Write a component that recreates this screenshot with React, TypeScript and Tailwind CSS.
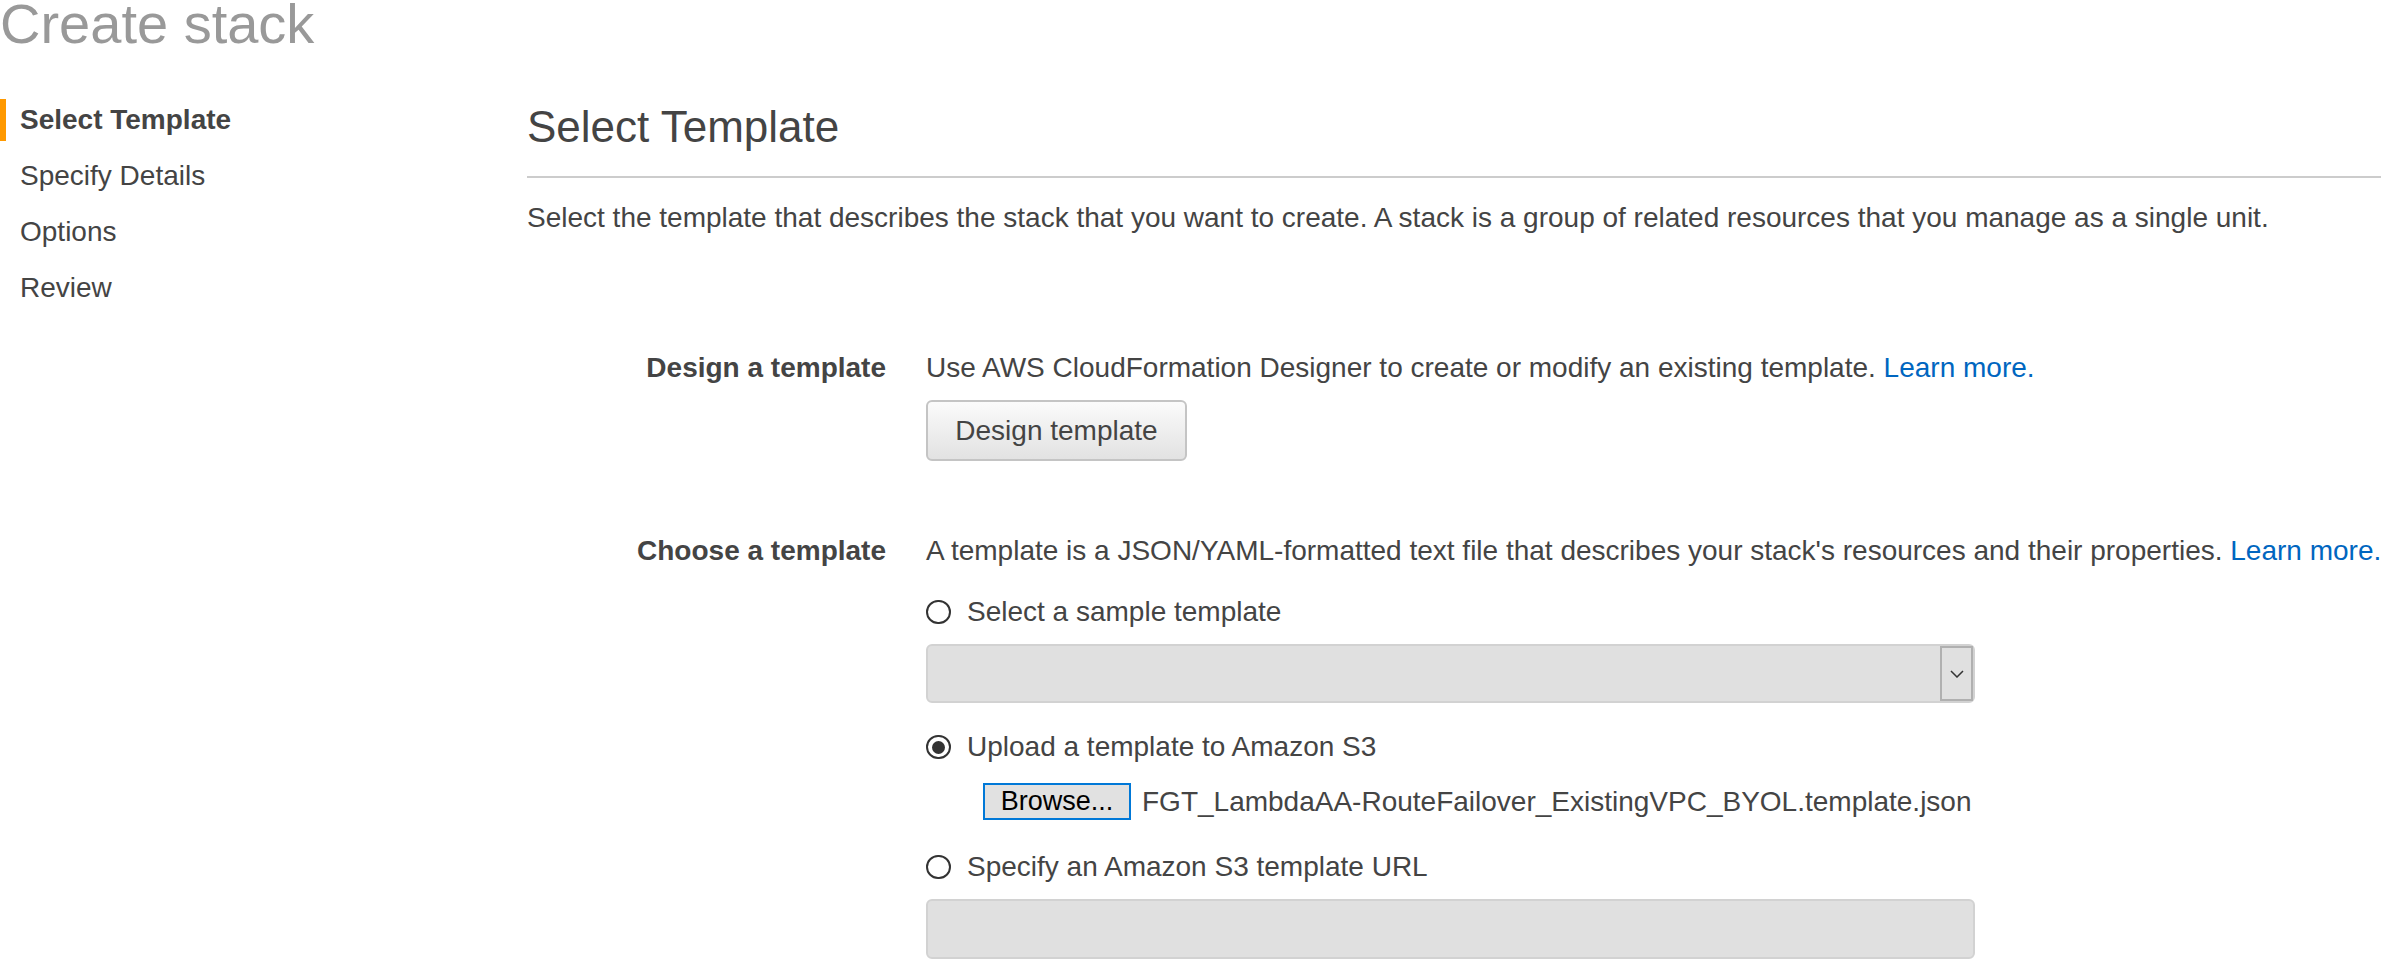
import React from "react";

function Radio({ checked }: { checked?: boolean }) {
  return (
    <span className="w-[25px] h-[24px] rounded-full border-2 border-[#333] bg-white flex items-center justify-center shrink-0">
      {checked ? <span className="w-[13px] h-[13px] rounded-full bg-[#333]" /> : null}
    </span>
  );
}

function RadioRow({ label, checked, className }: { label: string; checked?: boolean; className?: string }) {
  return (
    <div className={"flex items-center gap-[16px] h-[32px] " + (className ?? "")}>
      <Radio checked={checked} />
      <span className="text-[28px] leading-[32px] whitespace-nowrap">{label}</span>
    </div>
  );
}

export default function App() {
  return (
    <div className="w-[2381px] h-[965px] overflow-hidden bg-white text-[#444] font-[family-name:'Liberation_Sans',Arial,sans-serif]">
      <h1 className="text-[56px] leading-[56px] text-[#999] mt-[-4px] whitespace-nowrap font-normal">Create stack</h1>
      <div className="flex">
        <nav className="w-[527px] shrink-0 pt-[47px] flex flex-col gap-[14px] text-[28px]">
          <div className="h-[42px] flex items-center border-l-[6px] border-[#f90] pl-[14px] font-bold">Select Template</div>
          <div className="h-[42px] flex items-center pl-[20px]">Specify Details</div>
          <div className="h-[42px] flex items-center pl-[20px]">Options</div>
          <div className="h-[42px] flex items-center pl-[20px]">Review</div>
        </nav>
        <main className="flex-1 min-w-0 pt-[50px]">
          <h2 className="text-[44px] leading-[50px] font-normal whitespace-nowrap">Select Template</h2>
          <div className="mt-[24px] h-[2px] bg-[#cccccc]" />
          <p className="mt-[24px] text-[28px] leading-[32px] whitespace-nowrap">
            Select the template that describes the stack that you want to create. A stack is a group of related resources that you manage as a single unit.
          </p>

          <div className="mt-[118px] grid grid-cols-[359px_1fr] gap-x-[40px] text-[28px] leading-[32px]">
            <div className="text-right font-bold whitespace-nowrap">Design a template</div>
            <div>
              <p className="whitespace-nowrap">
                Use AWS CloudFormation Designer to create or modify an existing template.{" "}
                <span className="text-[#0066c0]">Learn more.</span>
              </p>
              <button className="mt-[16px] h-[61px] w-[261px] rounded-[6px] border-2 border-[#c4c4c4] bg-gradient-to-b from-[#fbfbfb] to-[#e2e2e2] text-[28px] text-[#444] flex items-center justify-center">
                Design template
              </button>
            </div>
          </div>

          <div className="mt-[74px] grid grid-cols-[359px_1fr] gap-x-[40px] text-[28px] leading-[32px]">
            <div className="text-right font-bold whitespace-nowrap">Choose a template</div>
            <div>
              <p className="whitespace-nowrap">
                A template is a JSON/YAML-formatted text file that describes your stack's resources and their properties.{" "}
                <span className="text-[#0066c0]">Learn more.</span>
              </p>
              <RadioRow label="Select a sample template" className="mt-[29px]" />
              <div className="mt-[16px] h-[59px] w-[1049px] rounded-[6px] border-2 border-[#d2d2d2] bg-[#e0e0e0] flex justify-end">
                <div className="w-[33px] h-[55px] border-2 border-[#b0b0b0] flex items-center justify-center">
                  <svg width="14" height="8" viewBox="0 0 14 8" fill="none">
                    <polyline points="1,1 7,7 13,1" stroke="#333" strokeWidth="1.5" />
                  </svg>
                </div>
              </div>
              <RadioRow label="Upload a template to Amazon S3" checked className="mt-[28px]" />
              <div className="mt-[20px] pl-[57px] flex items-center gap-[11px]">
                <button className="w-[148px] h-[37px] border-2 border-[#0078d7] bg-[#e1e1e1] text-black text-[27px] leading-none flex items-center justify-center">
                  Browse...
                </button>
                <span className="whitespace-nowrap text-[28px]">FGT_LambdaAA-RouteFailover_ExistingVPC_BYOL.template.json</span>
              </div>
              <RadioRow label="Specify an Amazon S3 template URL" className="mt-[31px]" />
              <div className="mt-[16px] h-[60px] w-[1049px] rounded-[6px] border-2 border-[#d2d2d2] bg-[#e0e0e0]" />
            </div>
          </div>
        </main>
      </div>
    </div>
  );
}
